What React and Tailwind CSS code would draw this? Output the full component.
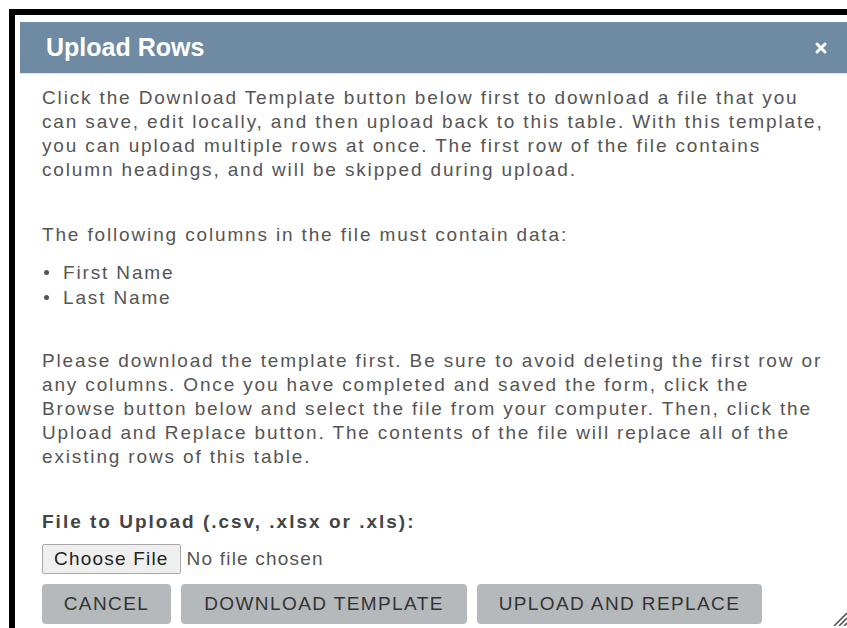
import { X } from 'lucide-react'

const bodyText = 'text-[19px] leading-[24px] tracking-[1.85px] text-[#555]'

function ActionButton({ children, className = '' }) {
  return (
    <button
      type="button"
      className={`h-[40px] rounded-[4px] bg-[#b6b9bc] text-[19px] tracking-[1.4px] text-[#333] ${className}`}
    >
      {children}
    </button>
  )
}

function Bullet({ children }) {
  return (
    <li className="flex items-center">
      <span className="ml-[2px] mr-[14px] h-[5px] w-[5px] rounded-full bg-[#555]" />
      {children}
    </li>
  )
}

export default function App() {
  return (
    <div
      className="h-[628px] w-[847px] overflow-hidden bg-white pl-[9px] pt-[9px]"
      style={{ fontFamily: '"Liberation Sans", Arial, sans-serif' }}
    >
      <div className="relative h-full border-l-[6px] border-t-[6px] border-black bg-white pl-[5px] pt-[7px]">
        <div className="flex h-[51px] items-center justify-between bg-[#6f8ba3] pl-[26px] pr-[18px] shadow-[0_1px_0_#dfe5ea]">
          <h2 className="text-[25px] font-bold text-white">Upload Rows</h2>
          <X className="h-[16px] w-[16px] text-white" strokeWidth={4.5} />
        </div>

        <div className="pl-[22px] pr-[6px] pt-[13px]">
          <p className={`${bodyText} whitespace-nowrap`}>
            Click the Download Template button below first to download a file that you
            <br />
            can save, edit locally, and then upload back to this table. With this template,
            <br />
            you can upload multiple rows at once. The first row of the file contains
            <br />
            column headings, and will be skipped during upload.
          </p>

          <p className={`${bodyText} mt-[41px]`}>The following columns in the file must contain data:</p>
          <ul className={`${bodyText} mt-[13px] leading-[25px]`}>
            <Bullet>First Name</Bullet>
            <Bullet>Last Name</Bullet>
          </ul>

          <p className={`${bodyText} mt-[39px] whitespace-nowrap`}>
            Please download the template first. Be sure to avoid deleting the first row or
            <br />
            any columns. Once you have completed and saved the form, click the
            <br />
            Browse button below and select the file from your computer. Then, click the
            <br />
            Upload and Replace button. The contents of the file will replace all of the
            <br />
            existing rows of this table.
          </p>

          <label className="mt-[41px] block text-[19px] font-bold leading-[24px] tracking-[2px] text-[#444]">
            File to Upload (.csv, .xlsx or .xls):
          </label>
          <div className="mt-[10px] flex items-center gap-[6px]">
            <span className="flex h-[30px] items-center rounded-[2px] border border-[#a9a9a9] bg-[#efefef] px-[11px] text-[19px] tracking-[1.2px] text-[#222]">
              Choose File
            </span>
            <span className="text-[19px] tracking-[1.2px] text-[#555]">No file chosen</span>
          </div>

          <div className="mt-[10px] flex gap-[10px]">
            <ActionButton className="w-[129px]">CANCEL</ActionButton>
            <ActionButton className="w-[286px]">DOWNLOAD TEMPLATE</ActionButton>
            <ActionButton className="w-[285px]">UPLOAD AND REPLACE</ActionButton>
          </div>
        </div>

        <svg className="absolute bottom-[2px] right-0 h-[16px] w-[16px]" viewBox="0 0 16 16">
          <path d="M3 16 L16 3 M8 16 L16 8 M13 16 L16 13" stroke="#555" strokeWidth="1.6" />
        </svg>
      </div>
    </div>
  )
}
